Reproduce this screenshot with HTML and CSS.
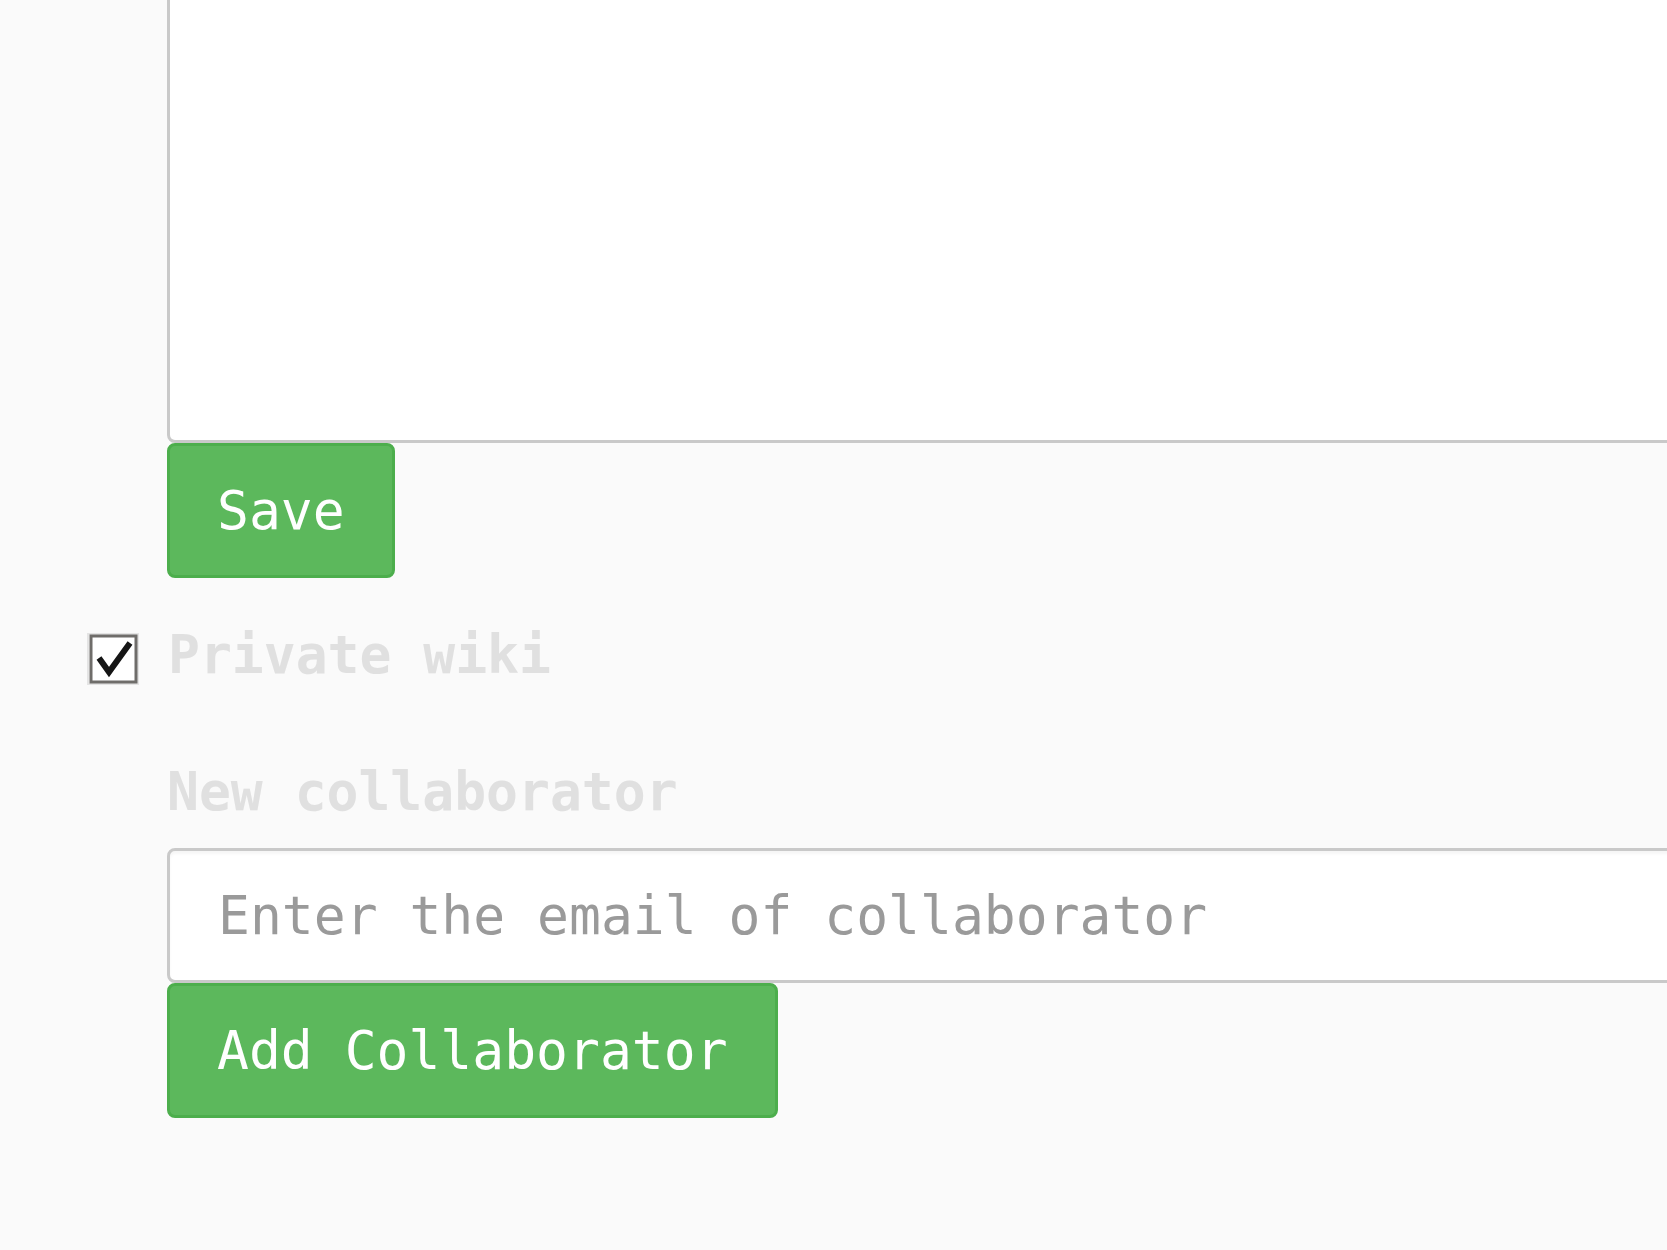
FILE: index.html
```html
<!DOCTYPE html>
<html lang="en">
<head>
<meta charset="utf-8">
<title>Wiki settings</title>
<link rel="stylesheet" href="styles.css">
</head>
<body>
<main class="page">
  <form class="wiki-form">
    <textarea class="form-control body-field" aria-label="Wiki content"></textarea>
    <button type="button" class="btn btn-success">Save</button>
  </form>

  <div class="checkbox-row">
    <span class="checkbox-box" aria-hidden="true">
      <svg width="52" height="52" viewBox="0 0 52 52">
        <rect x="1" y="1" width="50" height="50" fill="none" stroke="#e4e4e4" stroke-width="2"/>
        <rect x="4" y="3" width="45" height="46" fill="#ffffff" stroke="#6f6d6a" stroke-width="3"/>
        <path d="M12 25 L22 39 L43 10" fill="none" stroke="#151515" stroke-width="6" stroke-linecap="butt" stroke-linejoin="miter"/>
      </svg>
    </span>
    <label class="checkbox-label">Private wiki</label>
  </div>

  <form class="collab-form">
    <label class="field-label" for="collab">New collaborator</label>
    <input id="collab" class="form-control email-field" type="text" placeholder="Enter the email of collaborator">
    <button type="button" class="btn btn-success">Add Collaborator</button>
  </form>
</main>
</body>
</html>
```
FILE: styles.css
```css
html, body {
  margin: 0;
  padding: 0;
}

body {
  background: #fafafa;
  font-family: "DejaVu Sans Mono", "Liberation Mono", monospace;
  font-size: 53px;
  line-height: 75px;
  color: #333333;
  overflow: hidden;
  height: 1250px;
}

.page {
  padding-left: 167px;
}

.wiki-form,
.collab-form {
  display: flex;
  flex-direction: column;
  align-items: flex-start;
  margin: 0;
}

.form-control {
  box-sizing: border-box;
  display: block;
  width: 1600px;
  margin: 0;
  background: #ffffff;
  border: 3px solid #c9c9c9;
  font: inherit;
  color: #555555;
  outline: none;
}

.body-field {
  height: 443px;
  border-top: 0;
  border-radius: 0 0 0 8px;
  resize: none;
  padding: 0 48px;
  box-shadow: none;
}

.email-field {
  height: 135px;
  margin-top: 19px;
  padding: 0 48px;
  border-radius: 8px 0 0 8px;
  box-shadow: inset 0 3px 3px rgba(0, 0, 0, 0.04);
}

.email-field::placeholder {
  color: #9a9a9a;
  opacity: 1;
}

.btn {
  box-sizing: border-box;
  display: block;
  margin: 0;
  padding: 27px 47px;
  font: inherit;
  line-height: 75px;
  border-radius: 8px;
  cursor: pointer;
}

.btn-success {
  background: #5cb85c;
  border: 3px solid #4cae4c;
  color: #ffffff;
}

.checkbox-row {
  display: flex;
  align-items: flex-start;
  gap: 29px;
  margin-top: 39px;
  margin-left: -80px;
  height: 75px;
}

.checkbox-box {
  display: block;
  width: 52px;
  height: 52px;
  margin-top: 16px;
}

.checkbox-box svg {
  display: block;
}

.checkbox-label {
  font-weight: bold;
  color: #e0e0e0;
}

.field-label {
  display: block;
  margin-top: 62px;
  font-weight: bold;
  color: #e0e0e0;
}
```
